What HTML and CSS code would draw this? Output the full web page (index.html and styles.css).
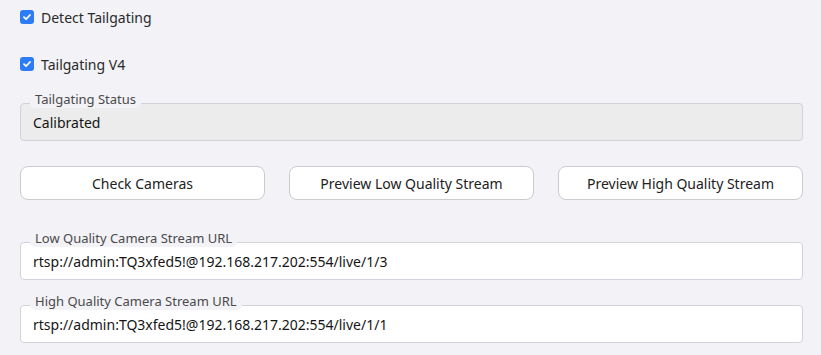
FILE: index.html
```html
<!DOCTYPE html>
<html lang="en">
<head>
  <meta charset="UTF-8" />
  <title>Tailgating Settings</title>
  <link rel="stylesheet" href="styles.css">
</head>
<body>
  <main class="settings">
    <label class="check first">
      <span class="box">
        <svg viewBox="0 0 14 14" width="14" height="14"><path d="M4 7.2 L6.1 9.2 L10 5" fill="none" stroke="#fff" stroke-width="1.8" stroke-linecap="round" stroke-linejoin="round"/></svg>
      </span>
      Detect Tailgating
    </label>

    <label class="check second">
      <span class="box">
        <svg viewBox="0 0 14 14" width="14" height="14"><path d="M4 7.2 L6.1 9.2 L10 5" fill="none" stroke="#fff" stroke-width="1.8" stroke-linecap="round" stroke-linejoin="round"/></svg>
      </span>
      Tailgating V4
    </label>

    <div class="field status">
      <span class="legend">Tailgating Status</span>
      <div class="value readonly">Calibrated</div>
    </div>

    <div class="actions">
      <button>Check Cameras</button>
      <button>Preview Low Quality Stream</button>
      <button>Preview High Quality Stream</button>
    </div>

    <div class="field low">
      <span class="legend">Low Quality Camera Stream URL</span>
      <div class="value">rtsp://admin:TQ3xfed5!@192.168.217.202:554/live/1/3</div>
    </div>

    <div class="field high">
      <span class="legend">High Quality Camera Stream URL</span>
      <div class="value">rtsp://admin:TQ3xfed5!@192.168.217.202:554/live/1/1</div>
    </div>
  </main>
</body>
</html>
```

FILE: styles.css
```css
body {
  font-family: 'Noto Sans', 'Open Sans', sans-serif;
  background-color: #f2f2f7;
  color: #222;
  margin: 0;
  padding: 0;
}

.settings {
  display: flex;
  flex-direction: column;
  padding: 7px 18px 0 20px;
}

.check {
  display: flex;
  align-items: center;
  gap: 7px;
  height: 20px;
  font-size: 14px;
  color: #2a2a2a;
}

.check.second {
  margin-top: 27px;
}

.box {
  width: 14px;
  height: 14px;
  border-radius: 3px;
  background-color: #2b7cf6;
  display: flex;
}

.field {
  position: relative;
}

.field.status {
  margin-top: 29px;
}

.field.low {
  margin-top: 42px;
}

.field.high {
  margin-top: 25px;
}

.legend {
  position: absolute;
  left: 10px;
  top: -12px;
  padding: 0 5px;
  line-height: 17px;
  font-size: 13px;
  color: #4a4a4a;
  background-color: #f2f2f7;
  border-radius: 5px;
}

.value {
  height: 38px;
  box-sizing: border-box;
  border: 1px solid #d2d3da;
  border-radius: 4px;
  background-color: #fff;
  padding: 0 12px;
  display: flex;
  align-items: center;
  font-size: 14px;
  color: #151515;
}

.value.readonly {
  background-color: #ececec;
}

.actions {
  display: grid;
  grid-template-columns: 1fr 1fr 1fr;
  gap: 24px;
  margin-top: 25px;
}

.actions button {
  height: 34px;
  background-color: #fff;
  border: 1px solid #cbcbcf;
  border-radius: 8px;
  font-family: inherit;
  font-size: 14px;
  color: #222;
  cursor: pointer;
}
```
